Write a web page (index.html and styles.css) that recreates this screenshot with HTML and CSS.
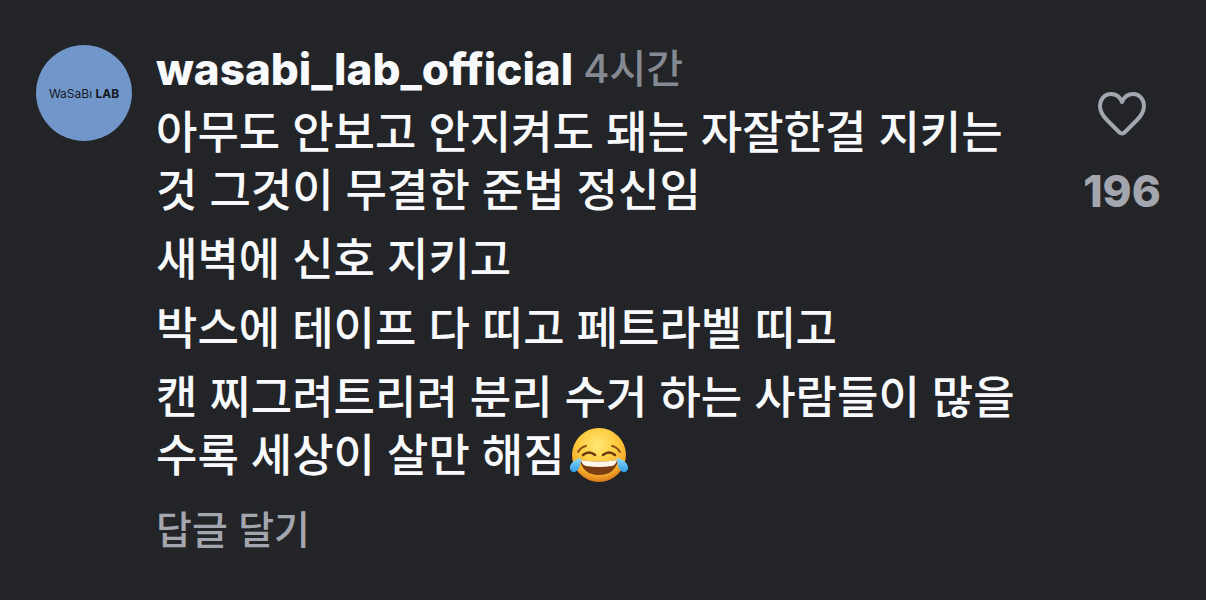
FILE: index.html
```html
<!DOCTYPE html>
<html lang="ko">
<head>
<meta charset="utf-8">
<title>wasabi_lab_official</title>
<link rel="stylesheet" href="styles.css">
</head>
<body>
<article class="comment">
  <a class="avatar" href="#"><span>WaSaBı <b>LAB</b></span></a>
  <div class="content">
    <header class="meta"><a class="name" href="#">wasabi_lab_official</a><time class="time">4시간</time></header>
    <div class="text">
      <p>아무도 안보고 안지켜도 돼는 자잘한걸 지키는<br>것 그것이 무결한 준법 정신임</p>
      <p>새벽에 신호 지키고</p>
      <p>박스에 테이프 다 띠고 페트라벨 띠고</p>
      <p>캔 찌그려트리려 분리 수거 하는 사람들이 많을<br>수록 세상이 살만 해짐<svg class="emoji" viewBox="0 0 60 56" role="img" aria-label="기쁨의 눈물">
        <defs>
          <radialGradient id="face" cx="48%" cy="32%" r="68%"><stop offset="0" stop-color="#ffe873"/><stop offset=".5" stop-color="#fdcb40"/><stop offset=".8" stop-color="#f5ad2c"/><stop offset="1" stop-color="#d9781a"/></radialGradient>
          <linearGradient id="tear" x1="0" y1="0" x2="0" y2="1"><stop offset="0" stop-color="#8fdcfb"/><stop offset="1" stop-color="#2b9be6"/></linearGradient>
        </defs>
        <circle cx="30" cy="28" r="27" fill="url(#face)"/>
        <path d="M9 25Q12 20 17 19M43 19Q48 20 51 25" fill="none" stroke="#8a5416" stroke-width="2" stroke-linecap="round"/>
        <path d="M14 28Q20 23 26 28M34 28Q40 23 46 28" fill="none" stroke="#6b3a12" stroke-width="2.5" stroke-linecap="round"/>
        <path d="M11 33Q30 36 49 33Q46 48 30 48Q14 48 11 33Z" fill="#7c3c14"/>
        <path d="M12 33Q30 36 48 33Q47 38 43 39Q30 41 17 39Q13 38 12 33Z" fill="#fff6ea"/>
        <path d="M12 31C6 32 0 37 1 42C3 48 12 46 12 31ZM48 31C54 32 60 37 59 42C57 48 48 46 48 31Z" fill="url(#tear)"/>
      </svg></p>
    </div>
    <button class="reply" type="button">답글 달기</button>
  </div>
  <button class="like" type="button" aria-label="좋아요 196">
    <svg class="heart" viewBox="0 0 48 44" aria-hidden="true"><path d="M24 10C26 5 30 2 35 2C42 2 46 8 46 14C46 20 43 24 39 28L27 40Q24 43 21 40L9 28C5 24 2 20 2 14C2 8 6 2 13 2C18 2 22 5 24 10Z"/></svg>
    <span>196</span>
  </button>
</article>
</body>
</html>
```
FILE: styles.css
```css
* { box-sizing: border-box; }
body { margin: 0; background: #222428; color: #f8f9fb; font-family: Inter, "Noto Sans CJK KR", sans-serif; }
button { border: 0; padding: 0; background: none; font: inherit; color: #a3a6ae; }
a { color: inherit; text-decoration: none; }
.comment { display: flex; align-items: flex-start; gap: 24px; padding: 45px 36px; }
.avatar { flex: none; display: flex; align-items: center; justify-content: center; width: 96px; height: 96px; border-radius: 50%; background: #7196c9; color: #15191f; font-size: 12px; white-space: nowrap; }
.content { flex: 1; min-width: 0; }
.meta { display: flex; align-items: center; gap: 10px; height: 48px; white-space: nowrap; }
.name { font-size: 44px; font-weight: 800; }
.time { font-size: 40px; font-weight: 500; line-height: 48px; color: #858992; }
.text { font-size: 45px; font-weight: 500; line-height: 58px; white-space: nowrap; }
.text p { margin: 11px 0; }
.emoji { width: 60px; height: 56px; margin-left: 4px; vertical-align: -11px; }
.reply { margin-top: 6px; font-size: 39px; font-weight: 500; line-height: 56px; }
.like { display: flex; flex: none; flex-direction: column; align-items: center; gap: 32px; width: 96px; padding-top: 47px; font-size: 44px; font-weight: 800; line-height: 46px; }
.heart { width: 48px; height: 44px; fill: none; stroke: #a3a6ae; stroke-width: 4; stroke-linejoin: round; }
```
